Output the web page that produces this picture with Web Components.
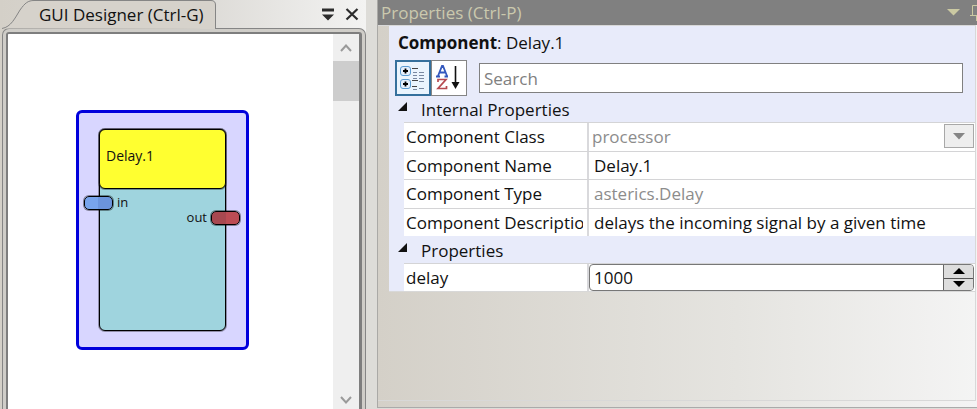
<!DOCTYPE html>
<html lang="en">
<head>
<meta charset="utf-8">
<title>GUI Designer</title>
<style>
  html, body { height: 100%; }
  body {
    margin: 0;
    overflow: hidden;
    font: 17px/24px "Open Sans", "Noto Sans", sans-serif;
    color: #111;
    background: #dddcd8;
  }
</style>
</head>
<body>
<designer-app></designer-app>
<script>
const define = (name, html, setup) => {
  const template = document.createElement('template');
  template.innerHTML = `<style>
    *, :host { box-sizing: border-box; }
    button, input, select { font: inherit; color: inherit; margin: 0; padding: 0; border: 0; background: none; border-radius: 0; min-width: 0; }
    svg { display: block; }
  </style>` + html;
  customElements.define(name, class extends HTMLElement {
    constructor() {
      super();
      this.attachShadow({ mode: 'open' }).append(template.content.cloneNode(true));
    }
    connectedCallback() { if (setup) setup(this, this.shadowRoot); }
  });
};

define('scroll-bar', `
  <style>
    :host { display: flex; flex-direction: column; width: 26px; background: #efefef; }
    button { display: grid; place-items: center; height: 27px; }
    .track + button { height: 18px; }
    .track { flex: 1; }
    .thumb { height: 40px; background: #cdcdcd; }
    path { fill: none; stroke: #9a9a9a; stroke-width: 2; }
  </style>
  <button aria-label="Scroll up"><svg width="12" height="8"><path d="M1 7 6 1.5 11 7"/></svg></button>
  <div class="track"><div class="thumb"></div></div>
  <button aria-label="Scroll down"><svg width="12" height="8"><path d="M1 1 6 6.5 11 1"/></svg></button>
`);

define('port-pin', `
  <style>
    :host { display: flex; align-items: center; gap: 4px; font-size: 13px; line-height: 16px; }
    :host([side="out"]) { flex-direction: row-reverse; }
    i { width: 29px; height: 14px; border: 1px solid #000; border-radius: 5px; box-shadow: 0 0 0 1px #0006;
        background: linear-gradient(90deg, #78a4ec 50%, #6b94dc 50%); }
    :host([side="out"]) i { background: linear-gradient(90deg, #a84850 50%, #bc4c54 50%); }
    span { margin-top: -2px; }
  </style>
  <i></i><span><slot></slot></span>
`);

define('component-node', `
  <style>
    :host { display: block; padding: 16px 20px; border: 3px solid #0000dc; border-radius: 6px; background: #d8d6ff; }
    .box, .title { border: 1px solid #000; border-radius: 6px; box-shadow: 0 0 0 1px #0005; }
    .box { display: flex; flex-direction: column; position: relative; height: 100%; background: #9fd4de; }
    .title { height: 60px; margin: -1px; padding: 16px 6px; background: #ffff30; font-size: 14px; line-height: 20px; }
    ::slotted([side="in"]) { position: absolute; left: -16px; top: 66px; }
    ::slotted([side="out"]) { position: absolute; right: -15px; top: 81px; }
  </style>
  <div class="box"><div class="title"></div><slot></slot></div>
`, (host, root) => { root.querySelector('.title').textContent = host.getAttribute('name'); });

define('designer-pane', `
  <style>
    :host { display: flex; flex-direction: column; padding: 0 11px 0 2px; background: linear-gradient(90deg, #d4d0c8, #dddbd7 55%, #f3f3f2 97%, #dddcd8 97%); }
    header { display: flex; height: 28px; align-items: center; }
    .tab { position: relative; width: 214px; height: 28px; padding: 0 0 0 37px; text-align: left; line-height: 30px; white-space: nowrap; }
    .tab svg { position: absolute; left: 0; top: 0; z-index: 0; }
    .tab span { position: relative; }
    .tools { display: flex; margin-left: auto; gap: 10px; padding-right: 7px; }
    .frame { display: flex; flex: 1; border: 1px solid #858585; border-bottom: 0; border-radius: 7px 7px 0 0; padding: 3px 3px 0; background: #cfcdc8; }
    .inner { display: flex; flex: 1; border: 2px solid #7e7e7e; border-right-width: 3px; border-bottom: 0; border-radius: 3px 3px 0 0; background: #fff; }
    .canvas { position: relative; flex: 1; }
    component-node { position: absolute; left: 68px; top: 76px; width: 173px; height: 240px; }
  </style>
  <header>
    <button class="tab" role="tab" aria-selected="true">
      <svg width="215" height="29" aria-hidden="true"><path d="M0 28.500C9 27 13 18 18 10 23 3 26 .5 32 .5H209Q213.500.5 213.500 5V29" fill="#d6d2cb" stroke="#858585"/></svg>
      <span>GUI Designer (Ctrl-G)</span>
    </button>
    <div class="tools">
      <button aria-label="Pane menu"><svg width="13" height="14"><path d="M0 1.500H12V4.500H0ZM0 7.500H12L6 13.500Z" fill="#2c2c2c"/></svg></button>
      <button aria-label="Close pane"><svg width="14" height="14"><path d="M1.500 2 12.500 12.500M12.500 2 1.500 12.500" stroke="#2c2c2c" stroke-width="2.200"/></svg></button>
    </div>
  </header>
  <div class="frame"><div class="inner">
    <div class="canvas">
      <component-node name="Delay.1">
        <port-pin side="in">in</port-pin>
        <port-pin side="out">out</port-pin>
      </component-node>
    </div>
    <scroll-bar></scroll-bar>
  </div></div>
`);

define('property-row', `
  <style>
    :host { display: grid; grid-template-columns: 183px minmax(0, 1fr); height: 28px; border-top: 1px solid #d4d4d6; background: #fff; }
    :host([readonly]) { height: 29px; }
    label { padding-left: 2px; line-height: 27px; margin-right: 4px; white-space: nowrap; overflow: hidden; }
    .value { display: grid; grid-template-columns: minmax(0, 1fr); border-left: 2px solid #d9d9dc; }
    .value > * { grid-area: 1 / 1; }
    input, select { width: 100%; height: 27px; padding-left: 5px; }
    :host([readonly]) input, select { color: #8c8c8c; opacity: 1; }
    select { appearance: none; padding-left: 3px; }
    .arrow { justify-self: end; align-self: start; display: grid; place-items: center; width: 30px; height: 24px; margin: 1px 1px 0 0; border: 1px solid #a8a8a8; background: #eee; pointer-events: none; }
    .spin { display: grid; grid-template-columns: minmax(0, 1fr) 30px; border: 1px solid #777; border-radius: 4px; margin-right: 1px; overflow: hidden; }
    .spin input { height: 25px; padding-left: 4px; appearance: textfield; }
    .spin input::-webkit-inner-spin-button { appearance: none; }
    .spin div { display: grid; grid-template-rows: 1fr 1fr; border-left: 1px solid #666; background: #ddd; }
    .spin button { display: grid; place-items: center; }
    .spin button + button { border-top: 1px solid #555; }
    input:focus { outline: none; }
  </style>
  <label for="v"></label>
  <div class="value"></div>
`, (host, root) => {
  const value = host.getAttribute('value');
  const kind = host.getAttribute('kind');
  root.querySelector('label').textContent = host.getAttribute('label');
  const box = root.querySelector('.value');
  if (kind === 'select') {
    box.innerHTML = `<select id="v" disabled><option>${value}</option></select>
      <span class="arrow"><svg width="12" height="7"><path d="M0 0H12L6 6.500Z" fill="#858585"/></svg></span>`;
  } else if (kind === 'number') {
    box.innerHTML = `<div class="spin"><input id="v" type="number" value="${value}"><div>
      <button aria-label="Increase"><svg width="12" height="6"><path d="M0 6 6 0 12 6Z"/></svg></button>
      <button aria-label="Decrease"><svg width="12" height="6"><path d="M0 0 6 6 12 0Z"/></svg></button></div></div>`;
    const input = box.querySelector('input');
    const [up, down] = box.querySelectorAll('button');
    up.onclick = () => input.stepUp();
    down.onclick = () => input.stepDown();
  } else {
    box.innerHTML = `<input id="v" value="${value}"${host.hasAttribute('readonly') ? ' readonly' : ''}>`;
  }
});

define('property-group', `
  <style>
    :host { display: block; }
    button { display: flex; align-items: center; gap: 14px; width: 100%; height: 26px; padding: 2px 0 0 9px; line-height: 24px; }
    button svg { margin-bottom: 8px; }
    .rows { padding-left: 15px; }
    .rows[hidden] { display: none; }
  </style>
  <button aria-expanded="true"><svg width="9" height="9"><path d="M9 0V9H0Z" fill="#111"/></svg><span></span></button>
  <div class="rows"><slot></slot></div>
`, (host, root) => {
  root.querySelector('span').textContent = host.getAttribute('label');
  const button = root.querySelector('button');
  button.onclick = () => {
    const rows = root.querySelector('.rows');
    rows.hidden = !rows.hidden;
    button.setAttribute('aria-expanded', !rows.hidden);
  };
});

define('properties-pane', `
  <style>
    :host { display: flex; flex-direction: column; min-width: 0; border-left: 1px solid #aaa9a6; border-bottom: 1px solid #aaa; padding-bottom: 6px; margin-bottom: 1px;
            background: linear-gradient(90deg, #d4d0c8, #e5e4e0 60%, #f4f4f4); }
    header { display: flex; align-items: center; height: 25px; padding-left: 3px; background: #808080; color: #cbc9ae; overflow: hidden; }
    h2 { margin: 0; font: inherit; line-height: 26px; padding-top: 1px; flex: 1; white-space: nowrap; }
    header button { flex: none; margin-left: 10px; }
    header button:last-child { width: 7px; overflow: hidden; }
    .body { flex: 1; margin-right: 1px; border: 1px solid #d8d8d8; border-left: 0; padding-left: 11px; }
    .grid { background: #e8ebfa; border-bottom: 1px solid #d8d8d8; }
    .name { margin: 0; padding: 5px 9px; }
    .bar { display: flex; align-items: center; padding: 0 12px 0 6px; }
    .bar button { display: grid; place-items: center; width: 36px; height: 36px; border: 1px solid #858585; background: #fff; }
    .bar button[aria-pressed="true"] { border: 2px solid #35709c; background: #eaf4fd; }
    .bar input { flex: 1; height: 30px; margin-left: 12px; padding: 0 4px; border: 1px solid #808080; background: #fff; }
    .bar input::placeholder { color: #808080; opacity: 1; }
    property-group + property-group { padding-top: 1px; }
  </style>
  <header>
    <h2>Properties (Ctrl-P)</h2>
    <button aria-label="Pane menu"><svg width="13" height="7"><path d="M0 0H13L6.500 6.500Z" fill="#cbc9a2"/></svg></button>
    <button aria-label="Pin pane"><svg width="13" height="17"><path d="M2.500 11V1.500H9.500V11M0 11.500H13M6.500 12V17M8 2V11" fill="none" stroke="#cbc9a2"/></svg></button>
  </header>
  <div class="body"><div class="grid">
    <p class="name"><b>Component</b>: Delay.1</p>
    <div class="bar">
      <button aria-label="Group by category" aria-pressed="true"><svg width="26" height="26">
        <g fill="#e4effc" stroke="#5a9bd2"><rect x=".5" y="1.500" width="10" height="9" rx="2.500"/><rect x=".5" y="14.500" width="10" height="9" rx="2.500"/></g>
        <path d="M5.500 3.500V8.500M3 6H8M5.500 16.500V21.500M3 19H8" stroke="#000" stroke-width="1.800"/>
        <path d="M12 3.500H18M12 15.500H18M12 21.500H17" stroke="#444"/>
        <path d="M13 7.500H17M19 7.500H24M13 10.500H17M19 10.500H24M13 13.500H17M19 13.500H24M19 16.500H24M19 23.500H24M13 24.500H17" stroke="#7888a0"/>
      </svg></button><button aria-label="Sort alphabetically" aria-pressed="false"><svg width="26" height="26">
        <path d="M2 11 6 1H7L11 11M3.500 7.500H9.500M0 11.500H4M8.500 11.500H12" fill="none" stroke="#3358bd" stroke-width="1.800"/>
        <path d="M2 17V14.500H10L2 23.500H10.500V21" fill="none" stroke="#b64a50" stroke-width="1.700"/>
        <path d="M19.500 1V20" stroke="#111" stroke-width="1.600"/><path d="M15.500 17H23.500L19.500 24Z" fill="#111"/>
      </svg></button>
      <input type="search" placeholder="Search" aria-label="Search">
    </div>
    <property-group label="Internal Properties">
      <property-row label="Component Class" value="processor" kind="select" readonly></property-row>
      <property-row label="Component Name" value="Delay.1"></property-row>
      <property-row label="Component Type" value="asterics.Delay" readonly></property-row>
      <property-row label="Component Description" value="delays the incoming signal by a given time"></property-row>
    </property-group>
    <property-group label="Properties">
      <property-row label="delay" value="1000" kind="number"></property-row>
    </property-group>
  </div></div>
`);

define('designer-app', `
  <style>
    :host { display: grid; grid-template-columns: 377px minmax(0, 1fr); height: 100vh; }
  </style>
  <designer-pane></designer-pane>
  <properties-pane></properties-pane>
`);
</script>
</body>
</html>
